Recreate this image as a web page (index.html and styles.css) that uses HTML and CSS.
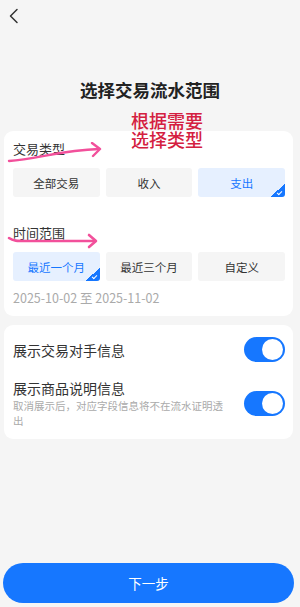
FILE: index.html
```
<!DOCTYPE html>
<html lang="zh-CN">
<head>
    <meta charset="UTF-8">
    <meta name="viewport" content="width=device-width, initial-scale=1.0">
    <title>选择交易流水范围</title>
    <link rel="stylesheet" href="styles.css">
</head>
<body>
    <div class="page">
        <div class="top-bar">
            <svg class="back-icon" width="12" height="16" viewBox="0 0 12 16">
                <path d="M9 1.5 L2.5 8 L9 14.5" fill="none" stroke="#333" stroke-width="1.5" stroke-linecap="round" stroke-linejoin="round"/>
            </svg>
        </div>
        <h1 class="page-title">选择交易流水范围</h1>

        <div class="card range-card">
            <div class="section-label">交易类型</div>
            <div class="option-row">
                <div class="option">全部交易</div>
                <div class="option">收入</div>
                <div class="option selected">支出<span class="corner"></span></div>
            </div>
            <div class="section-label second">时间范围</div>
            <div class="option-row">
                <div class="option selected">最近一个月<span class="corner"></span></div>
                <div class="option">最近三个月</div>
                <div class="option">自定义</div>
            </div>
            <div class="date-range">2025-10-02 至 2025-11-02</div>
        </div>

        <div class="card switch-card">
            <div class="switch-row">
                <div class="switch-text">
                    <div class="switch-title">展示交易对手信息</div>
                </div>
                <div class="toggle on"><span class="knob"></span></div>
            </div>
            <div class="switch-row second">
                <div class="switch-text">
                    <div class="switch-title">展示商品说明信息</div>
                    <div class="switch-desc">取消展示后，对应字段信息将不在流水证明透出</div>
                </div>
                <div class="toggle on"><span class="knob"></span></div>
            </div>
        </div>

        <div class="spacer"></div>
        <button class="next-btn">下一步</button>

        <!-- annotations drawn over the screenshot -->
        <div class="note">
            <div>根据需要</div>
            <div>选择类型</div>
        </div>
        <svg class="mark mark-type" width="100" height="24" viewBox="0 0 100 24">
            <path d="M2 19 C 30 17, 55 8, 92 7" fill="none" stroke="#f2509b" stroke-width="2.4" stroke-linecap="round"/>
            <path d="M85 1 L93 7 L86 14" fill="none" stroke="#f2509b" stroke-width="2.4" stroke-linecap="round" stroke-linejoin="round"/>
        </svg>
        <svg class="mark mark-time" width="100" height="20" viewBox="0 0 100 20">
            <path d="M2 7 C 6 10, 10 10, 20 10 L 88 10" fill="none" stroke="#f2509b" stroke-width="2.6" stroke-linecap="round"/>
            <path d="M82 4 L89 10 L82 16" fill="none" stroke="#f2509b" stroke-width="2.6" stroke-linecap="round" stroke-linejoin="round"/>
        </svg>
    </div>
</body>
</html>
```
FILE: styles.css
```
/* Page */
* {
    box-sizing: border-box;
}

body {
    margin: 0;
    background-color: #f5f5f5;
    font-family: "Noto Sans CJK SC", "Noto Sans", sans-serif;
    color: #333;
}

.page {
    position: relative;
    width: 300px;
    height: 607px;
    padding: 0 7px 4px 4px;
    display: flex;
    flex-direction: column;
    overflow: hidden;
}

.top-bar {
    height: 30px;
    display: flex;
    align-items: center;
    padding-left: 4px;
    padding-top: 2px;
}

.page-title {
    margin: 48px 0 0;
    height: 53px;
    font-size: 17.5px;
    line-height: 24px;
    font-weight: bold;
    text-align: center;
    color: #222;
    padding-left: 3px;
}

.card {
    background-color: #fff;
    border-radius: 9px;
}

.range-card {
    padding: 8px 8px 9px 9px;
}

.section-label {
    font-size: 13px;
    line-height: 20px;
    color: #333;
    margin-bottom: 9px;
}

.section-label.second {
    margin-top: 26px;
}

.option-row {
    display: grid;
    grid-template-columns: repeat(3, 1fr);
    gap: 6px;
}

.option {
    position: relative;
    height: 29px;
    display: flex;
    align-items: center;
    justify-content: center;
    background-color: #f5f5f5;
    border-radius: 3px;
    font-size: 11.5px;
    color: #333;
    overflow: hidden;
}

.option.selected {
    background-color: #e6f0ff;
    color: #1677ff;
}

.corner {
    position: absolute;
    right: 0;
    bottom: 0;
    width: 15px;
    height: 13px;
    background: linear-gradient(to bottom right, transparent 50%, #1677ff 50%);
}

.corner:after {
    content: '';
    position: absolute;
    right: 3px;
    bottom: 3px;
    width: 4px;
    height: 2px;
    border-left: 1.2px solid #fff;
    border-bottom: 1.2px solid #fff;
    transform: rotate(-45deg);
}

.date-range {
    margin-top: 8px;
    font-size: 12.5px;
    line-height: 18px;
    color: #aaa;
}

.switch-card {
    margin-top: 9px;
    padding: 12px 8px 11px 9px;
}

.switch-row {
    display: flex;
    align-items: center;
    justify-content: space-between;
}

.switch-row.second {
    margin-top: 16px;
}

.switch-title {
    font-size: 14px;
    line-height: 20px;
    color: #333;
}

.switch-desc {
    width: 215px;
    font-size: 10.5px;
    line-height: 15px;
    color: #aaa;
}

.toggle {
    width: 41px;
    height: 25px;
    border-radius: 13px;
    background-color: #ccc;
    position: relative;
    flex-shrink: 0;
}

.toggle.on {
    background-color: #1677ff;
}

.knob {
    position: absolute;
    top: 2px;
    right: 2px;
    width: 21px;
    height: 21px;
    border-radius: 50%;
    background-color: #fff;
}

.spacer {
    flex: 1;
}

.next-btn {
    width: 291px;
    margin-left: -1px;
    height: 40px;
    border: none;
    border-radius: 20px;
    background-color: #1677ff;
    color: #fff;
    font-family: inherit;
    font-size: 13.5px;
}

/* Annotations */
.note {
    position: absolute;
    left: 131px;
    top: 111px;
    font-size: 18px;
    line-height: 19px;
    font-weight: 500;
    color: #d42040;
}

.mark {
    position: absolute;
}

.mark-type {
    left: 7px;
    top: 142px;
}

.mark-time {
    left: 7px;
    top: 231px;
}
```
